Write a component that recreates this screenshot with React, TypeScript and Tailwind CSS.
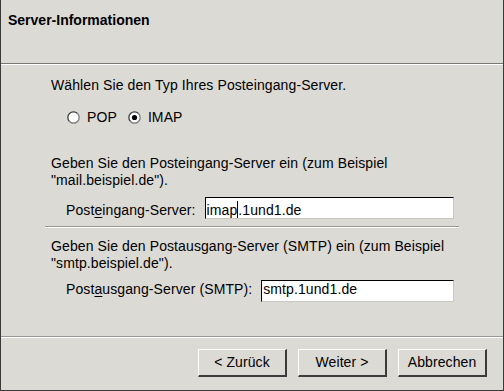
type RadioProps = { label: string; checked?: boolean };

function Radio({ label, checked }: RadioProps) {
    return (
        <div className="flex items-center gap-[7px]">
            <svg className="shrink-0" width="13" height="13" viewBox="0 0 13 13">
                <circle cx="6.5" cy="6.5" r="5.6" fill="#ffffff" />
                <path d="M2.5 10.5 A5.6 5.6 0 0 1 10.5 2.5" fill="none" stroke="#3c3c3c" strokeWidth="1.3" />
                <path d="M10.5 2.5 A5.6 5.6 0 0 1 2.5 10.5" fill="none" stroke="#7c7c7c" strokeWidth="1.3" />
                {checked && <circle cx="6.5" cy="6.5" r="2.6" fill="#000000" />}
            </svg>
            <span>{label}</span>
        </div>
    );
}

function Field({ children, cursorAfter }: { children: React.ReactNode; cursorAfter?: string }) {
    return (
        <div className="h-[22px] flex-1 border-t border-l border-b border-r border-t-black border-l-black border-b-[#c9c7c2] border-r-[#c9c7c2] bg-white pl-[1px] leading-[16px]">
            {cursorAfter !== undefined ? (
                <span>
                    {cursorAfter}
                    <span className="inline-block h-[17px] w-px translate-y-[3px] bg-black" />
                    {children}
                </span>
            ) : (
                <span>{children}</span>
            )}
        </div>
    );
}

function Button({ children }: { children: React.ReactNode }) {
    return (
        <button className="flex h-[28px] w-[89px] items-center justify-center border-t border-l border-b-2 border-r-2 border-t-white border-l-white border-b-[#3c3c3c] border-r-[#3c3c3c] bg-[#dcdad5] text-[14px] leading-[17px] text-black">
            {children}
        </button>
    );
}

export default function App() {
    return (
        <div
            className="flex h-[391px] w-[504px] flex-col border-l border-r border-b border-[#3a3a3a] bg-[#dcdad5] text-[14px] leading-[17px] tracking-[0.1px] text-black"
            style={{ fontFamily: '"Liberation Sans", Arial, sans-serif' }}
        >
            {/* header */}
            <div className="h-[63px] pl-[7px] pt-[12px]">
                <p className="font-bold tracking-normal">Server-Informationen</p>
            </div>
            <div className="h-px bg-[#7a7874]" />
            <div className="h-px bg-white" />

            {/* body */}
            <div className="flex flex-1 flex-col px-[44px] pt-[12px]">
                <div className="pl-[6px] pr-[5px]">
                    <p>Wählen Sie den Typ Ihres Posteingang-Server.</p>
                    <div className="mt-[15px] flex h-[17px] items-center gap-[11px] pl-[16px]">
                        <Radio label="POP" />
                        <Radio label="IMAP" checked />
                    </div>
                    <p className="mt-[29px]">
                        Geben Sie den Posteingang-Server ein (zum Beispiel
                        <br />
                        "mail.beispiel.de").
                    </p>
                    <div className="mt-[8px] flex items-baseline gap-[9px] pl-[15px]">
                        <span>
                            Post<span className="underline underline-offset-2">e</span>ingang-Server:
                        </span>
                        <Field cursorAfter="imap">.1und1.de</Field>
                    </div>
                </div>

                <div className="mt-[7px] h-px bg-[#9a9894]" />
                <div className="h-px bg-white" />

                <div className="pl-[6px] pr-[5px] pt-[10px]">
                    <p>
                        Geben Sie den Postausgang-Server (SMTP) ein (zum Beispiel
                        <br />
                        "smtp.beispiel.de").
                    </p>
                    <div className="mt-[8px] flex items-baseline gap-[9px] pl-[15px]">
                        <span>
                            Post<span className="underline underline-offset-2">a</span>usgang-Server (SMTP):
                        </span>
                        <Field>smtp.1und1.de</Field>
                    </div>
                </div>
            </div>

            {/* footer */}
            <div className="h-px bg-[#9a9894]" />
            <div className="h-px bg-white" />
            <div className="flex h-[52px] items-start justify-end gap-[11px] pr-[16px] pt-[11px]">
                <Button>&lt; Zurück</Button>
                <Button>Weiter &gt;</Button>
                <Button>Abbrechen</Button>
            </div>
        </div>
    );
}
